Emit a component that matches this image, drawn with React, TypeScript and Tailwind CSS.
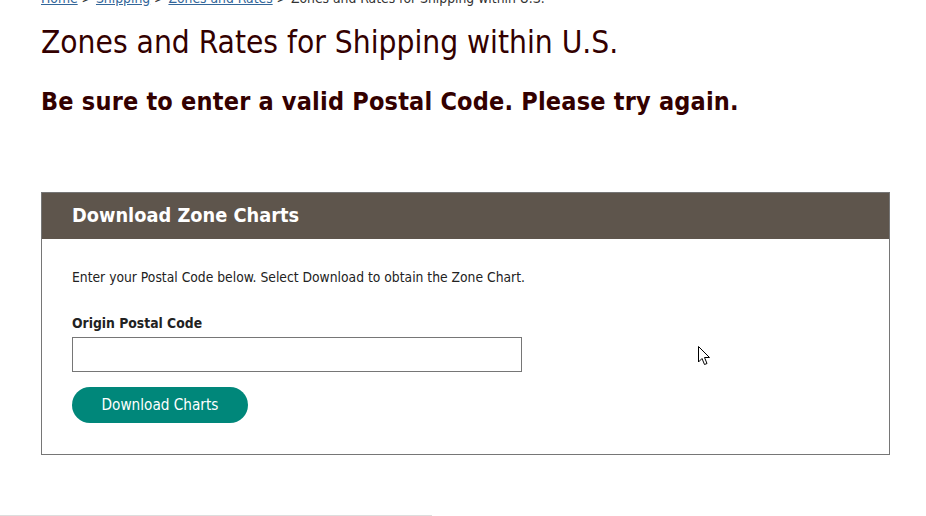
import React from 'react';

const font = { fontFamily: '"DejaVu Sans Condensed", "DejaVu Sans", sans-serif' };

const Cursor: React.FC = () => (
  <svg width="13" height="20" viewBox="0 0 13 20" className="absolute left-[698px] top-[346px]">
    <path d="M0.5 0.5 L0.5 16 L4 12.5 L6.5 18.5 L9 17.5 L6.5 11.5 L11.5 11.5 Z" fill="#fff" stroke="#000" strokeWidth="1" />
  </svg>
);

export default function App() {
  return (
    <div className="relative h-[516px] w-[926px] overflow-hidden bg-white text-[#330000]" style={font}>
      {/* Breadcrumb, partly scrolled off */}
      <div className="-mt-[12px] px-[41px] text-[13.8px] leading-[20px] text-[#333333]">
        <a className="text-[#336699] underline">Home</a> &gt;{' '}
        <a className="text-[#336699] underline">Shipping</a> &gt;{' '}
        <a className="text-[#336699] underline">Zones and Rates</a> &gt; Zones and Rates for Shipping within U.S.
      </div>

      <div className="px-[41px]">
        <h1 className="mt-[14px] text-[31.4px] leading-[40px] font-normal">Zones and Rates for Shipping within U.S.</h1>
        <h2 className="mt-[24px] text-[25px] leading-[32px] font-bold tracking-[0.2px]">
          Be sure to enter a valid Postal Code. Please try again.
        </h2>

        {/* Download box */}
        <div className="mt-[74px] w-[849px] border border-[#767676]">
          <div className="flex h-[46px] items-center bg-[#5e554c] px-[30px]">
            <span className="text-[19.8px] font-bold text-white">Download Zone Charts</span>
          </div>
          <div className="px-[30px] pt-[29px] pb-[31px]">
            <p className="text-[13.75px] leading-[18px] text-[#222222]">
              Enter your Postal Code below. Select Download to obtain the Zone Chart.
            </p>
            <label className="mt-[28px] block text-[13.8px] leading-[18px] font-bold text-[#222222]">Origin Postal Code</label>
            <input className="mt-[5px] block h-[35px] w-[450px] border border-[#767676] px-2 text-[14px] outline-none" />
            <button className="mt-[15px] flex h-[36px] w-[176px] items-center justify-center rounded-full bg-[#00877a] text-[15.2px] text-white">
              Download Charts
            </button>
          </div>
        </div>
      </div>

      <div className="absolute bottom-0 left-0 h-px w-[432px] bg-[#dddddd]" />
      <Cursor />
    </div>
  );
}
